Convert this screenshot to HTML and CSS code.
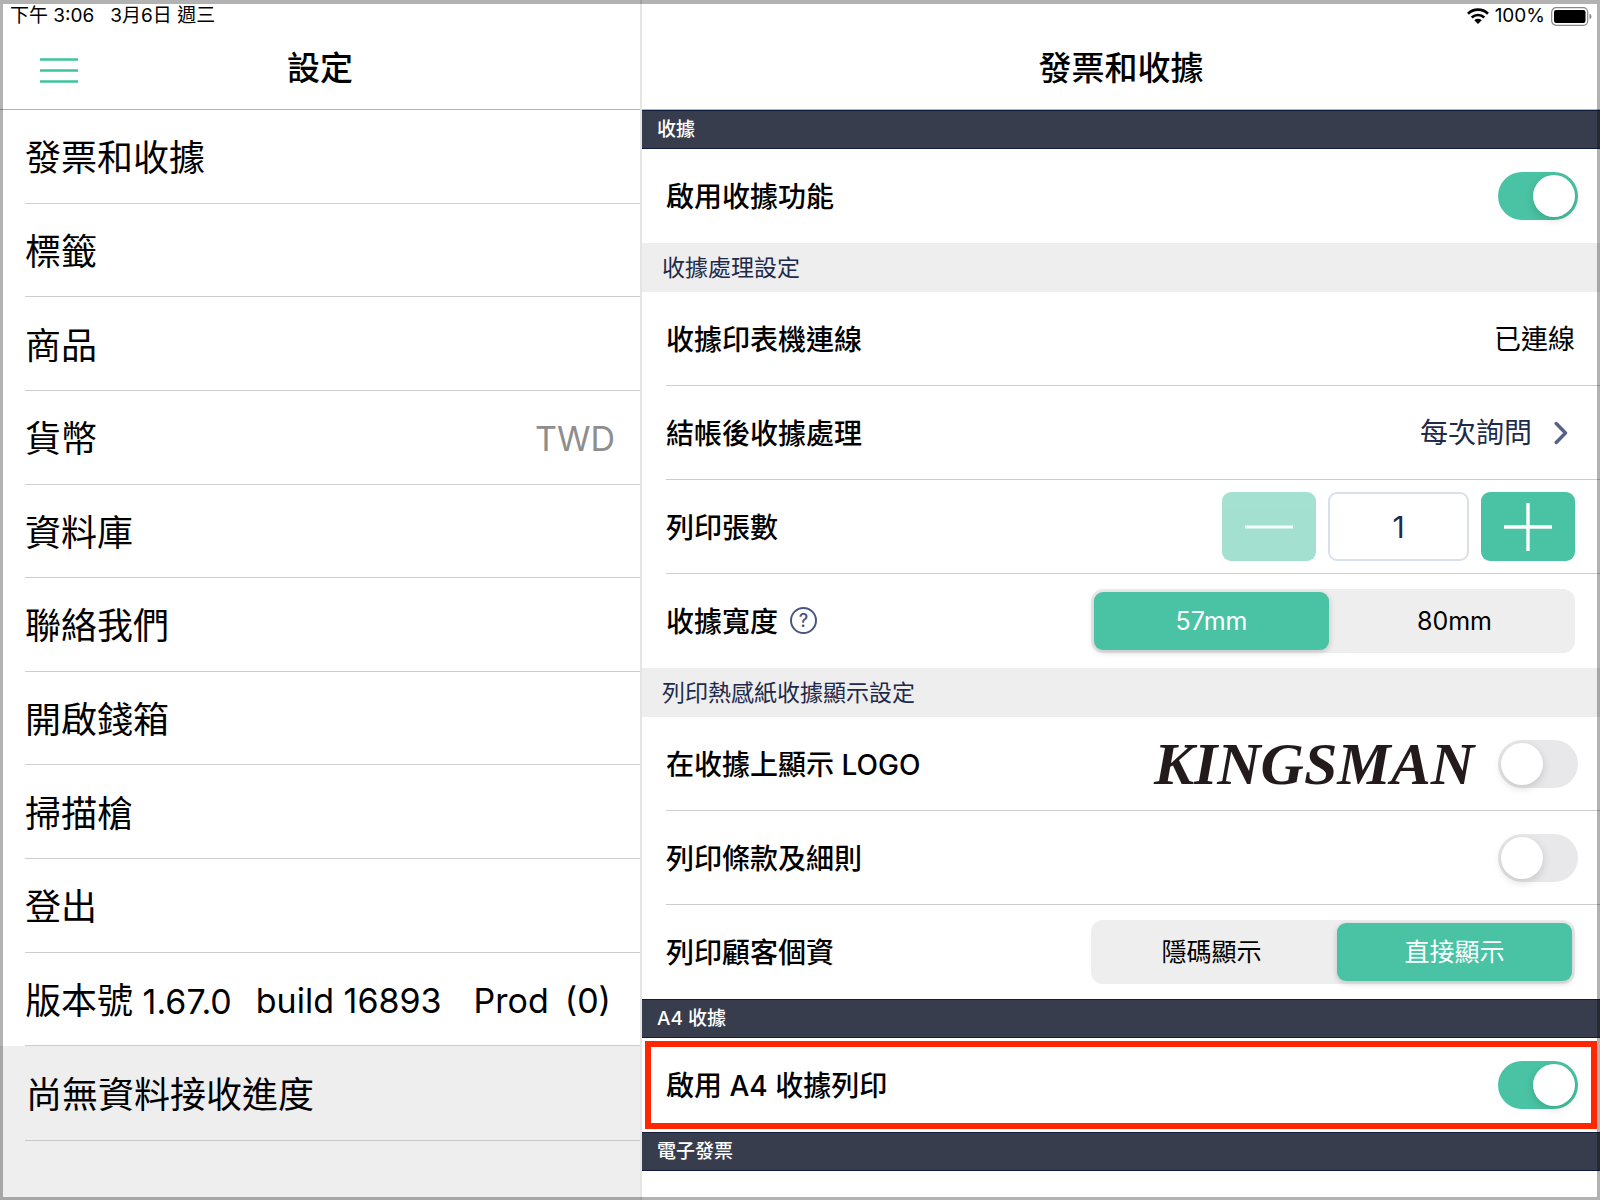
FILE: index.html
```html
<!DOCTYPE html>
<html lang="zh-Hant">
<head>
<meta charset="utf-8">
<meta name="viewport" content="width=device-width, initial-scale=1">
<title>設定 - 發票和收據</title>
<link rel="stylesheet" href="styles.css">
</head>
<body>
<div class="app">
  <aside class="side">
    <header class="head">
      <div class="status"><span>下午 3:06</span><span>3月6日 週三</span></div>
      <div class="bar">
        <button class="menu" type="button" aria-label="選單">
          <svg width="38" height="30" viewBox="0 0 38 30"><path d="M0 6.500h38M0 17.500h38M0 28.500h38" stroke="#3fc4a0" stroke-width="2.600"/></svg>
        </button>
        <h1 class="title">設定</h1>
      </div>
    </header>
    <nav class="nav">
      <a class="item" href="#receipt">發票和收據</a>
      <a class="item" href="#label">標籤</a>
      <a class="item" href="#goods">商品</a>
      <a class="item" href="#currency">貨幣<span class="item-value">TWD</span></a>
      <a class="item" href="#database">資料庫</a>
      <a class="item" href="#contact">聯絡我們</a>
      <a class="item" href="#drawer">開啟錢箱</a>
      <a class="item" href="#scanner">掃描槍</a>
      <a class="item" href="#logout">登出</a>
      <div class="item version"><div class="release"><span>版本號<span class="latin"> 1.67.0</span></span><span class="latin">build 16893</span></div><div class="channel latin"><span>Prod</span><span>(0)</span></div></div>
      <div class="item item-muted">尚無資料接收進度</div>
    </nav>
    <div class="side-rest"></div>
  </aside>

  <main class="main">
    <header class="head">
      <div class="status status-right">
        <svg width="22" height="16" viewBox="0 0 22 16" role="img" aria-label="Wi-Fi">
          <g fill="none" stroke="#000" stroke-width="2.700"><path d="M1 5.700a14.500 14.500 0 0 1 20 0"/><path d="M4.700 9.500a9.200 9.200 0 0 1 12.600 0"/></g>
          <path d="M7.300 12.200a5.400 5.400 0 0 1 7.400 0L11 15.900z" fill="#000"/>
        </svg>
        <span>100%</span>
        <svg width="41" height="19" viewBox="0 0 41 19" role="img" aria-label="電量">
          <rect x="0.700" y="0.700" width="36" height="17.600" rx="4.500" fill="none" stroke="#888" stroke-width="1.200"/>
          <rect x="3" y="3" width="31.500" height="13" rx="2.200" fill="#000"/>
          <path d="M38.500 6.500q2 1 2 3t-2 3z" fill="#888"/>
        </svg>
      </div>
      <div class="bar"><h2 class="title">發票和收據</h2></div>
    </header>

    <h3 class="band">收據</h3>
    <div class="row row-last">
      <label class="name" for="enable">啟用收據功能</label>
      <input class="switch" id="enable" type="checkbox" checked>
    </div>

    <h4 class="group">收據處理設定</h4>
    <div class="row row-text">
      <span class="name">收據印表機連線</span>
      <span class="state">已連線</span>
    </div>
    <div class="row row-text">
      <span class="name">結帳後收據處理</span>
      <button class="choice" type="button">每次詢問
        <svg width="14" height="24" viewBox="0 0 14 24"><path d="M2.200 2.500 11.500 12 2.200 21.500" fill="none" stroke="#56628a" stroke-width="3.400" stroke-linecap="round" stroke-linejoin="round"/></svg>
      </button>
    </div>
    <div class="row row-text">
      <label class="name" for="copies">列印張數</label>
      <div class="stepper">
        <button class="step" type="button" aria-label="減少" disabled>
          <svg width="48" height="48" viewBox="0 0 48 48"><path d="M0 24h48" stroke="#fff" stroke-opacity="0.900" stroke-width="3"/></svg>
        </button>
        <input class="count" id="copies" type="text" value="1">
        <button class="step" type="button" aria-label="增加">
          <svg width="48" height="48" viewBox="0 0 48 48"><path d="M0 24h48M24 0v48" stroke="#fff" stroke-width="3.400"/></svg>
        </button>
      </div>
    </div>
    <div class="row row-text row-last">
      <span class="name">收據寬度</span>
      <button class="help" type="button" aria-label="說明">?</button>
      <div class="segments" role="radiogroup" aria-label="收據寬度">
        <label class="segment"><input type="radio" name="width" checked>57mm</label>
        <label class="segment"><input type="radio" name="width">80mm</label>
      </div>
    </div>

    <h4 class="group">列印熱感紙收據顯示設定</h4>
    <div class="row">
      <label class="name" for="logo">在收據上顯示 LOGO</label>
      <span class="logo">KINGSMAN</span>
      <input class="switch" id="logo" type="checkbox">
    </div>
    <div class="row">
      <label class="name" for="terms">列印條款及細則</label>
      <input class="switch" id="terms" type="checkbox">
    </div>
    <div class="row row-text row-last">
      <span class="name">列印顧客個資</span>
      <div class="segments" role="radiogroup" aria-label="列印顧客個資">
        <label class="segment"><input type="radio" name="privacy">隱碼顯示</label>
        <label class="segment"><input type="radio" name="privacy" checked>直接顯示</label>
      </div>
    </div>

    <h3 class="band">A4 收據</h3>
    <div class="row row-marked">
      <label class="name" for="a4">啟用 A4 收據列印</label>
      <input class="switch" id="a4" type="checkbox" checked>
    </div>
    <h3 class="band">電子發票</h3>
  </main>
</div>
</body>
</html>
```

FILE: styles.css
```css
* {
  box-sizing: border-box;
}

body {
  margin: 0;
  background: #fff;
  color: #000;
  font-family: Inter, "Noto Sans CJK TC", sans-serif;
}

/* translucent window edge, over everything */
body::after {
  content: "";
  position: fixed;
  inset: 0;
  border: solid rgba(0, 0, 0, 0.3);
  border-width: 4px 3px 3px;
  pointer-events: none;
}

h1, h2, h3, h4 {
  margin: 0;
}

button, input {
  font: inherit;
}

button {
  padding: 0;
  border: 0;
  background: none;
  cursor: pointer;
}

svg {
  display: block;
}

.app {
  display: grid;
  grid-template-columns: 2fr 3fr;
  min-height: 100vh;
}

.side {
  display: flex;
  flex-direction: column;
  min-width: 0;
}

.main {
  border-left: 2px solid #e5e5e5;
  min-width: 0;
}

/* headers */
.head {
  height: 110px;
  border-bottom: 1px solid #b5b5b5;
}

.status {
  display: flex;
  align-items: center;
  gap: 16px;
  height: 28px;
  padding: 4px 10px 0;
  font-size: 19px;
  line-height: 24px;
}

.status-right {
  justify-content: flex-end;
  gap: 6px;
  padding-right: 8px;
}

.bar {
  display: grid;
  grid-template-columns: 78px 1fr 78px;
  align-items: center;
  height: 80px;
}

.menu {
  justify-self: end;
}

.title {
  grid-column: 2;
  text-align: center;
  font-size: 33px;
  font-weight: 500;
  line-height: 48px;
}

/* left list */
.nav {
  display: grid;
  grid-template-columns: minmax(0, 1fr);
  grid-auto-rows: 1fr;
  flex: 1;
}

.item {
  display: flex;
  align-items: center;
  justify-content: space-between;
  margin-left: 25px;
  padding: 4px 25px 0 0;
  border-bottom: 1px solid #cdcdcd;
  color: #000;
  font-size: 36px;
  line-height: 48px;
  text-decoration: none;
  white-space: pre;
}

.item-value {
  color: #8e8e8e;
  font-size: 34px;
}

.version {
  justify-content: flex-start;
  gap: 32px;
}

.release {
  display: flex;
  gap: 24px;
}

.channel {
  display: flex;
  gap: 16px;
}

.latin {
  font-size: 34px;
}

.item-muted {
  margin-left: 0;
  padding-left: 26px;
  border-bottom: 0;
  background: #eee;
}

.side-rest {
  height: 60px;
  padding-left: 25px;
  background: #eee;
}

.side-rest::before {
  content: "";
  display: block;
  border-top: 1px solid #c8c8c8;
}

/* right pane */
.band {
  height: 39px;
  padding-left: 15px;
  border: solid #0f1c3c;
  border-width: 1px 0;
  background: #373d4c;
  color: #fff;
  font-size: 19px;
  font-weight: 500;
  line-height: 37px;
}

.group {
  height: 49px;
  padding-left: 20px;
  background: #eee;
  color: #1f2a4a;
  font-size: 23px;
  font-weight: 400;
  line-height: 50px;
}

.row {
  display: flex;
  align-items: center;
  height: 94px;
  margin-left: 24px;
  padding-right: 22px;
  border-bottom: 1px solid #cdcdcd;
}

.row-text {
  padding-right: 25px;
}

.row-last {
  border-bottom-color: transparent;
}

.row-marked {
  height: 88px;
  margin: 3px;
  padding: 0 13px 0 15px;
  border: 6px solid #ff2600;
}

.name {
  padding-top: 2px;
  font-size: 28px;
  font-weight: 500;
  line-height: 40px;
}

.name ~ :last-child {
  margin-left: auto;
}

.state {
  padding-top: 2px;
  font-size: 27px;
  line-height: 40px;
}

.choice {
  display: flex;
  align-items: center;
  gap: 22px;
  padding-right: 7px;
  color: #1f2a4a;
  font-size: 28px;
  line-height: 40px;
}

.switch {
  appearance: none;
  width: 80px;
  height: 48px;
  margin: 0;
  padding: 3px;
  border-radius: 24px;
  background: #e8e8ea;
}

.switch::before {
  content: "";
  display: block;
  width: 42px;
  height: 42px;
  border-radius: 50%;
  background: #fff;
  box-shadow: 0 3px 8px rgba(0, 0, 0, 0.15);
}

.switch:checked {
  background: #49c3a3;
}

.switch:checked::before {
  margin-left: auto;
}

.stepper {
  display: flex;
  gap: 12px;
}

.step {
  display: grid;
  place-items: center;
  width: 94px;
  height: 69px;
  border-radius: 9px;
  background: #49c3a3;
}

.step:disabled {
  opacity: 0.5;
}

.count {
  width: 141px;
  height: 69px;
  padding: 0;
  border: 2px solid #d8e1ea;
  border-radius: 9px;
  color: #1f2a4a;
  font-size: 30px;
  text-align: center;
}

.help {
  width: 27px;
  height: 27px;
  margin-left: 12px;
  border: 2px solid #4a5680;
  border-radius: 50%;
  color: #4a5680;
  font-size: 18px;
  font-weight: 500;
  line-height: 22px;
}

.segments {
  display: grid;
  grid-template-columns: 1fr 1fr;
  gap: 8px;
  width: 484px;
  height: 64px;
  padding: 3px;
  border-radius: 12px;
  background: #eee;
}

.segment {
  display: grid;
  place-items: center;
  border-radius: 9px;
  font-size: 25px;
  line-height: 36px;
}

.segment:has(:checked) {
  background: #49c3a3;
  box-shadow: 0 2px 6px rgba(0, 0, 0, 0.2);
  color: #fff;
}

.segment input {
  position: absolute;
  appearance: none;
  margin: 0;
}

.logo {
  margin: 0 24px 0 auto;
  color: #231a1c;
  font-family: "Liberation Serif", serif;
  font-size: 60px;
  font-style: italic;
  font-weight: 700;
  line-height: 64px;
}

.logo + .switch {
  margin-left: 0;
}
```
